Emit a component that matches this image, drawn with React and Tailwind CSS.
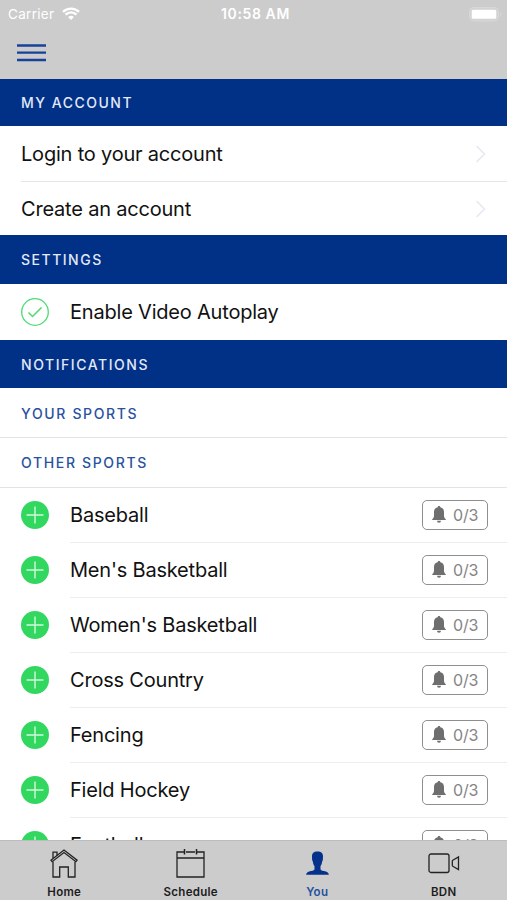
import React from 'react';

// Sports the user can subscribe to
const SPORTS = [
  'Baseball',
  "Men's Basketball",
  "Women's Basketball",
  'Cross Country',
  'Fencing',
  'Field Hockey',
  'Football'
];

const MenuIcon = () => (
  <svg width="29" height="18" viewBox="0 0 29 18" stroke="#17429a" strokeWidth="2.3">
    <path d="M0 1.5h29M0 8.7h29M0 16h29" />
  </svg>
);

const WifiIcon = () => (
  <svg width="18" height="14" viewBox="0 0 18 14" fill="#fff">
    <path d="M9 13 6.1 10.1a4.2 4.2 0 0 1 5.8 0Z" />
    <path d="M3.6 7.6a7.6 7.6 0 0 1 10.8 0M1 4.9a11.4 11.4 0 0 1 16 0" fill="none" stroke="#fff" strokeWidth="2.4" />
  </svg>
);

const BatteryIcon = () => (
  <svg width="34" height="15" viewBox="0 0 34 15">
    <rect x="0.5" y="0.5" width="29" height="13.5" rx="4" fill="#d2d2d2" stroke="#d8d8d8" />
    <rect x="2.7" y="2.7" width="24.6" height="9" rx="1.5" fill="#fff" />
    <path d="M31.3 5v5c1.6-.8 1.6-4.2 0-5Z" fill="#dadada" />
  </svg>
);

const ChevronIcon = () => (
  <svg width="12" height="20" viewBox="0 0 12 20" fill="none" stroke="#e8e8f4" strokeWidth="1.6">
    <path d="m1.5 2 8 8-8 8" />
  </svg>
);

const CheckIcon = () => (
  <svg width="28" height="28" viewBox="0 0 28 28" fill="none" stroke="#4cdb73" strokeWidth="1.3">
    <circle cx="14" cy="14" r="13.3" />
    <path d="m7.5 14.5 4 4L20.5 9.5" strokeWidth="1.5" />
  </svg>
);

const PlusIcon = () => (
  <svg width="28" height="28" viewBox="0 0 28 28">
    <circle cx="14" cy="14" r="14" fill="#32d75f" />
    <path d="M5.5 14h17M14 5.5v17" stroke="#d3f8dc" strokeWidth="1.4" />
  </svg>
);

const BellIcon = () => (
  <svg width="14" height="17" viewBox="0 0 14 17" fill="#6e6e6e">
    <path d="M7 0c.8 0 1.3.5 1.3 1.2 2.4.5 3.7 2.2 3.7 4.8v3.5c0 1.6.5 2.800 1.800 3.700v.9H.2v-.9C1.500 12.300 2 11.100 2 9.500V6c0-2.600 1.300-4.300 3.700-4.800C5.700.5 6.200 0 7 0Z" />
    <path d="M5 14.700h4A2 2 0 0 1 5 14.700Z" />
  </svg>
);

const HomeIcon = () => (
  <svg width="28" height="29" viewBox="0 0 28 29" fill="none" stroke="#222" strokeWidth="1.3">
    <path d="M.9 11.200 14 1l13.100 10.200-1.200 1.500L14 3.600 2.100 12.700Z" />
    <path d="M3 12.500V28h6.700V18h8.600v10H25V12.500" />
    <path d="M3 9.500V3.200h4v3.200" />
  </svg>
);

const CalendarIcon = () => (
  <svg width="29" height="29" viewBox="0 0 29 29" fill="none" stroke="#222" strokeWidth="1.3">
    <path d="M8 3H1v25h27V3h-7M10 3h9M1 9h27" />
    <path d="M8.500 0v5.500M20.500 0v5.500" strokeWidth="1.5" />
  </svg>
);

const PersonIcon = () => (
  <svg width="23" height="24" viewBox="0 0 23 24" fill="#03318c">
    <path d="M11.500.5c3.900 0 5.500 1.800 5.500 4.800 0 1.400-.1 1.900-.1 3.100 0 1-.5 1.300-.7 2-.4 2.200-.8 3.400-1.700 4.500v3c0 1 1 1.500 3.500 2.200 3 .8 4.500 1.400 4.900 3.600H.1c.4-2.200 1.900-2.800 4.900-3.600 2.500-.7 3.500-1.200 3.500-2.200v-3c-.9-1.100-1.300-2.300-1.700-4.500-.2-.7-.7-1-.7-2C6.100 7.200 6 6.700 6 5.300 6 2.300 7.600.5 11.500.5Z" />
  </svg>
);

const VideoIcon = () => (
  <svg width="32" height="21" viewBox="0 0 32 21" fill="none" stroke="#222" strokeWidth="1.3">
    <rect x="1" y="1" width="20" height="18.500" rx="2" />
    <path d="M30.500 4v12.500l-5.700-3.300a1 1 0 0 1-.5-.9V8.200a1 1 0 0 1 .5-.9Z" />
  </svg>
);

const SectionHeader = ({ title, className = '' }) => (
  <div className={`shrink-0 flex items-center pl-[21px] bg-[#013087] text-[#e2e9f8] text-sm font-medium ${className}`}>
    {title}
  </div>
);

const SubHeader = ({ title, className = '' }) => (
  <div className={`shrink-0 flex items-center pl-[21px] border-b border-[#e4e4e4] text-[#2852a0] text-sm font-medium ${className}`}>
    {title}
  </div>
);

const LinkRow = ({ label, className = '' }) => (
  <div className={`shrink-0 ml-[21px] pr-5 flex items-center justify-between ${className}`}>
    <span>{label}</span>
    <ChevronIcon />
  </div>
);

const SportRow = ({ name }) => (
  <div className="shrink-0 h-[55px] pl-[21px] flex">
    <div className="w-[49px] pb-px flex items-center">
      <PlusIcon />
    </div>
    <div className="flex-1 pr-[19px] flex items-center justify-between border-b border-[#ededed]">
      <span>{name}</span>
      <div className="w-[66px] h-[30px] pl-[9px] flex items-center border border-[#8f8f8f] rounded-[5px]">
        <span className="pb-[2px]">
          <BellIcon />
        </span>
        <span className="ml-[7px] text-base text-[#858585]">0/3</span>
      </div>
    </div>
  </div>
);

const TabItem = ({ label, icon, active }) => (
  <div className={`flex-1 pt-[6px] flex flex-col items-center text-[11.5px] font-semibold tracking-[0.3px] ${active ? 'text-[#2450a0]' : 'text-[#1c1c1c]'}`}>
    <div className="h-8 flex items-center">{icon}</div>
    <span className="mt-[5px] leading-4">{label}</span>
  </div>
);

const App = () => (
  <div className="w-[507px] h-[900px] flex flex-col overflow-hidden bg-white text-[#111] text-xl tracking-[-0.2px] font-[Inter,sans-serif]">
    {/* Status bar */}
    <header className="shrink-0 h-[79px] bg-[#ccc]">
      <div className="h-7 pl-2 pr-1 grid grid-cols-3 items-center text-white text-[13.5px]">
        <div className="flex items-center gap-2">
          <span className="tracking-[0.3px]">Carrier</span>
          <WifiIcon />
        </div>
        <span className="text-center text-sm font-semibold tracking-[0.6px]">10:58 AM</span>
        <div className="flex justify-end">
          <BatteryIcon />
        </div>
      </div>
      <button className="mt-4 ml-[17px] block">
        <MenuIcon />
      </button>
    </header>

    {/* Settings list */}
    <main className="flex-1 min-h-0 flex flex-col overflow-hidden">
      <SectionHeader title="MY ACCOUNT" className="h-[47px] tracking-[1.5px]" />
      <LinkRow label="Login to your account" className="h-[56px] pt-px border-b border-[#e6e6e6]" />
      <LinkRow label="Create an account" className="h-[53px]" />
      <SectionHeader title="SETTINGS" className="h-[49px] tracking-[1.5px]" />
      <div className="shrink-0 h-14 pl-[21px] flex items-center gap-[21px]">
        <CheckIcon />
        <span>Enable Video Autoplay</span>
      </div>
      <SectionHeader title="NOTIFICATIONS" className="h-[48px] pt-px tracking-[1.55px]" />
      <SubHeader title="YOUR SPORTS" className="h-[50px] pt-[2px] tracking-[1.65px]" />
      <SubHeader title="OTHER SPORTS" className="h-[50px] tracking-[1.65px]" />
      {SPORTS.map((name) => (
        <SportRow key={name} name={name} />
      ))}
    </main>

    {/* Tab bar */}
    <nav className="shrink-0 h-[60px] pl-px flex bg-[#ccc] border-t border-[#bdbdbd]">
      <TabItem label="Home" icon={<HomeIcon />} />
      <TabItem label="Schedule" icon={<CalendarIcon />} />
      <TabItem label="You" icon={<PersonIcon />} active />
      <TabItem label="BDN" icon={<VideoIcon />} />
    </nav>
  </div>
);

export default App;
